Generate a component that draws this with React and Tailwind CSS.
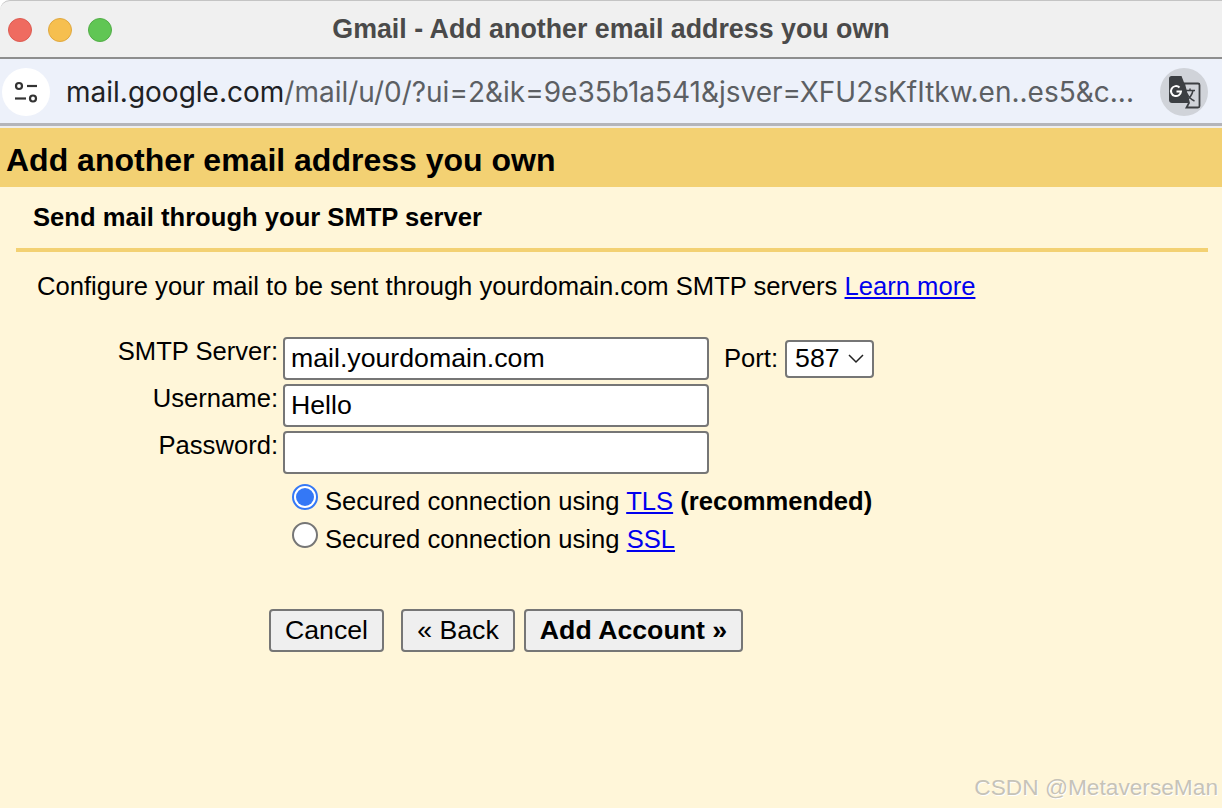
const arial = { fontFamily: '"Liberation Sans", Arial, sans-serif' };

function TuneIcon() {
  return (
    <svg width="26" height="26" viewBox="0 0 26 26" fill="none" stroke="#333" strokeWidth="2.2">
      <circle cx="6" cy="7" r="3" />
      <path d="M14 7h10" />
      <path d="M2 19.500h11" />
      <circle cx="20" cy="19.500" r="3" />
    </svg>
  );
}

function TranslateIcon() {
  return (
    <svg width="36" height="36" viewBox="0 0 36 36">
      <path d="M3 4.500C3 3 4 2 5.500 2h10L26 29H6c-1.700 0-3-1.300-3-3z" fill="#3c3f43" />
      <path d="M18 9.500h14c1 0 1.500.5 1.500 1.500v21c0 1-.5 1.500-1.500 1.500H20.500L23 29z" fill="#d0d3d9" stroke="#3c3f43" strokeWidth="1.800" />
      <path d="M13.500 13.500a5 5 0 1 0 1.500 4H10.500" fill="none" stroke="#fff" strokeWidth="2" />
      <path d="M19 16.500h10M24 14.500v2M27 16.500c-1 5-4 8-7 10M21 19.500c1.500 3.500 4 6 7.500 7.500" fill="none" stroke="#3c3f43" strokeWidth="1.500" />
    </svg>
  );
}

function Field({ label, value }) {
  return (
    <>
      <label className="text-right pr-[5px] text-[25.6px] leading-[28px]">{label}</label>
      <div className="h-[43px] w-[426px] rounded-[4px] border-2 border-[#767676] bg-white px-[6px] text-[26.7px] leading-[39px] text-black">
        {value}
      </div>
    </>
  );
}

function Button({ children, className = "" }) {
  return (
    <button className={`h-[43px] rounded-[4px] border-2 border-[#767676] bg-[#efefef] text-[26.7px] leading-none text-black ${className}`}>
      {children}
    </button>
  );
}

export default function App() {
  return (
    <div style={arial} className="relative h-[808px] w-[1222px] overflow-hidden bg-[#fff6d9] text-black">
      <div className="bg-white">
        <header className="relative flex h-[59px] items-center justify-center rounded-tl-[10px] border-b-2 border-t border-[#8e8e8e] border-t-[#c4c4c4] bg-[#f0f0f0] pt-[1px]">
          <div className="absolute left-2 top-[17px] flex gap-4">
            <span className="size-6 rounded-full border border-[#dd5c52] bg-[#ef6b60]" />
            <span className="size-6 rounded-full border border-[#e0a83f] bg-[#f6bf4f]" />
            <span className="size-6 rounded-full border border-[#52ad47] bg-[#60c654]" />
          </div>
          <h1 className="text-[26.8px] font-bold text-[#4a4a4a]">Gmail - Add another email address you own</h1>
        </header>
      </div>

      <div className="flex h-[64px] items-center justify-between bg-[#edf1fa] pl-[2px] pr-[14px] pt-[2px]">
        <div className="flex items-center">
          <div className="flex size-12 items-center justify-center rounded-full bg-white">
            <TuneIcon />
          </div>
          <div className="ml-4 w-[1072px] whitespace-nowrap text-[28px] text-[#5c5f63]" style={{ fontFamily: "Inter, sans-serif" }}>
            <span className="text-[#202124]">mail.google.com</span>/mail/u/0/?ui=2&amp;ik=9e35b1a541&amp;jsver=XFU2sKfItkw.en..es5&amp;c...
          </div>
        </div>
        <div className="flex size-12 items-center justify-center rounded-full bg-[#d0d3d9]">
          <TranslateIcon />
        </div>
      </div>

      <div className="h-[5px] border-t-[3px] border-[#b4b5ba] bg-[#eeeeee]" />

      <div className="flex h-[59px] items-center bg-[#f3d173] pl-[6px] pt-[5px] text-[32px] font-bold">
        Add another email address you own
      </div>

      <div className="pl-[16px] pr-[14px]">
        <div className="border-b-4 border-[#f3d173] pl-[17px] pt-[14px] pb-[15px] text-[25.6px] font-bold leading-[32px]">
          Send mail through your SMTP server
        </div>

        <p className="pl-[21px] pt-[18px] text-[25.6px] leading-[32px]">
          Configure your mail to be sent through yourdomain.com SMTP servers{" "}
          <a className="text-[#0000ee] underline">Learn more</a>
        </p>

        <div className="mt-[35px] grid grid-cols-[267px_426px_1fr] gap-y-[4px]">
          <Field label="SMTP Server:" value="mail.yourdomain.com" />
          <div className="flex items-center pl-[15px] text-[25.6px]">
            <span>Port:</span>
            <div className="ml-[7px] flex h-[38px] w-[89px] items-center justify-between rounded-[4px] border-2 border-[#767676] bg-white pl-[8px] pr-[8px] text-[26.7px]">
              587
              <svg width="16" height="10" viewBox="0 0 16 10" fill="none" stroke="#222" strokeWidth="1.500">
                <path d="M1 1l7 7 7-7" />
              </svg>
            </div>
          </div>
          <Field label="Username:" value="Hello" />
          <div />
          <Field label="Password:" value="" />
          <div />
        </div>

        <div className="ml-[276px] mt-[10px] flex flex-col gap-[8px] text-[25.6px] leading-[26px]">
          <div className="flex items-start">
            <span className="flex size-[26px] shrink-0 items-center justify-center rounded-full border-2 border-[#3478f6] bg-white">
              <span className="size-[18px] rounded-full bg-[#3478f6]" />
            </span>
            <span className="ml-[7px] pt-[4px]">
              Secured connection using <a className="text-[#0000ee] underline">TLS</a> <b>(recommended)</b>
            </span>
          </div>
          <div className="flex items-start">
            <span className="size-[26px] shrink-0 rounded-full border-2 border-[#767676] bg-white" />
            <span className="ml-[7px] pt-[4px]">
              Secured connection using <a className="text-[#0000ee] underline">SSL</a>
            </span>
          </div>
        </div>

        <div className="ml-[253px] mt-[57px] flex">
          <Button className="w-[115px]">Cancel</Button>
          <Button className="ml-[17px] w-[114px]">« Back</Button>
          <Button className="ml-[9px] w-[219px] font-bold">Add Account »</Button>
        </div>
      </div>

      <div className="absolute bottom-[4px] right-[4px] text-[22.7px] text-[#c6c3b8] [text-shadow:1px_1px_0_#ffffff]">CSDN @MetaverseMan</div>
    </div>
  );
}
